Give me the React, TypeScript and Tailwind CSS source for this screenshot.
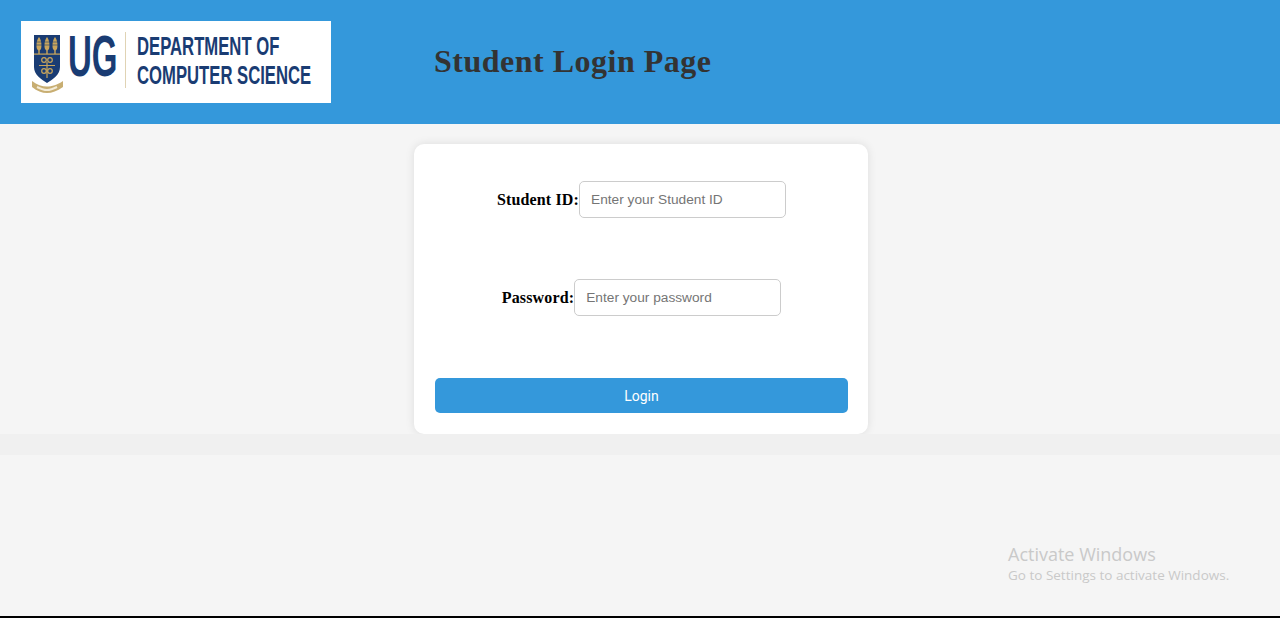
const navy = "#1a3c73"
const gold = "#c9a55c"

function Tree({ x }: { x: number }) {
  return (
    <g fill={gold}>
      <path d={`M${x} 2 C${x + 2.5} 5 ${x + 3} 11 ${x + 2} 14 L${x + 0.7} 15.5 L${x + 0.7} 19 L${x - 0.7} 19 L${x - 0.7} 15.5 L${x - 2} 14 C${x - 3} 11 ${x - 2.5} 5 ${x} 2 Z`} />
      <path d={`M${x - 2.6} 7 L${x + 2.6} 7 M${x - 3} 10 L${x + 3} 10`} stroke={navy} strokeWidth="0.6" />
    </g>
  )
}

function Logo() {
  return (
    <svg viewBox="0 0 310 82" className="block w-[310px] h-[82px]">
      {/* Crest */}
      <g transform="translate(13 14)">
        <path d="M0 0 H26 V32 C26 40 19 44 13 48 C7 44 0 40 0 32 Z" fill={navy} />
        <rect x="0" y="18.5" width="26" height="1.2" fill={gold} />
        <Tree x={5} />
        <Tree x={13} />
        <Tree x={21} />
        <g fill="none" stroke={gold} strokeWidth="1.2">
          <circle cx="10" cy="25" r="2.3" />
          <circle cx="16" cy="25" r="2.3" />
          <circle cx="10" cy="36" r="2.3" />
          <circle cx="16" cy="36" r="2.3" />
          <path d="M5 30.5 H21 M13 27 V43" />
        </g>
        <path d="M-2 46 C3 50 8 51.5 13 51.5 C18 51.5 23 50 29 46 L29 52 C23 56 18 58 13 58 C8 58 3 56 -2 52 Z" fill="#c8ae72" />
        <path d="M3 52 C7 54 10 55 13 55 C16 55 19 54 23 52" fill="none" stroke="#f4ecd8" strokeWidth="2" />
      </g>
      <text transform="translate(47 55) scale(0.57 1)" fontFamily="Liberation Sans, Arial, sans-serif" fontWeight="700" fontSize="58" fill={navy}>
        UG
      </text>
      <rect x="104" y="11" width="1" height="56" fill="#e0d3b4" />
      <text transform="translate(116 34) scale(0.642 1)" fontFamily="Liberation Sans, Arial, sans-serif" fontWeight="700" fontSize="26" fill={navy}>
        DEPARTMENT OF
      </text>
      <text transform="translate(116 63) scale(0.642 1)" fontFamily="Liberation Sans, Arial, sans-serif" fontWeight="700" fontSize="26" fill={navy}>
        COMPUTER SCIENCE
      </text>
    </svg>
  )
}

function Field({ label, placeholder, type = "text" }: { label: string; placeholder: string; type?: string }) {
  return (
    <div className="flex items-center justify-center">
      <label className="font-['Liberation_Serif',serif] font-bold text-base tracking-[0.15px] text-black">{label}</label>
      <input
        type={type}
        placeholder={placeholder}
        className="w-[207px] h-[37px] px-[11px] border border-[#cccccc] rounded-[5px] bg-white text-[13.7px] font-['Liberation_Sans',Arial,sans-serif] placeholder:text-[#757575] outline-none"
      />
    </div>
  )
}

export default function App() {
  return (
    <div className="relative h-[618px] flex flex-col bg-[#f5f5f5] overflow-hidden">
      {/* Header */}
      <header className="h-[124px] shrink-0 bg-[#3498db] flex items-center pl-[21px] pb-[1px]">
        <div className="bg-white shrink-0">
          <Logo />
        </div>
        <h1 className="ml-[103px] pb-[2px] font-['Liberation_Serif',serif] font-bold text-[32px] tracking-[0.5px] text-[#333333]">
          Student Login Page
        </h1>
      </header>

      {/* Login card */}
      <main className="shrink-0 flex justify-center pt-5 pl-[2px]">
        <form className="w-[454px] h-[290px] bg-white rounded-[10px] shadow-[0_0_10px_rgba(0,0,0,0.1)] pl-[21px] pr-[20px] pt-[37px] flex flex-col">
          <Field label="Student ID:" placeholder="Enter your Student ID" />
          <div className="mt-[61px]">
            <Field label="Password:" placeholder="Enter your password" type="password" />
          </div>
          <button
            type="button"
            className="mt-[62px] h-[35px] w-full rounded-[5px] bg-[#3498db] text-white text-sm font-['Roboto',sans-serif]"
          >
            Login
          </button>
        </form>
      </main>

      {/* Footer band */}
      <div className="h-[21px] shrink-0 bg-[#f0f0f0]" />
      <div className="flex-1" />
      <div className="h-[2px] shrink-0 bg-black" />

      {/* Windows watermark */}
      <div className="absolute left-[1008px] top-[544px] font-['Open_Sans',sans-serif] text-[#c9c9c9]">
        <div className="text-[18px] leading-[21px]">Activate Windows</div>
        <div className="text-[13.5px] leading-[20px]">Go to Settings to activate Windows.</div>
      </div>
    </div>
  )
}
